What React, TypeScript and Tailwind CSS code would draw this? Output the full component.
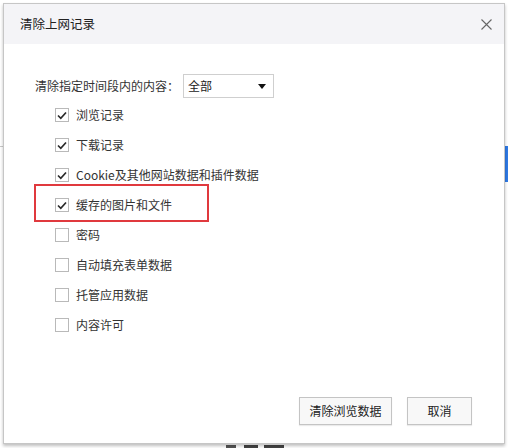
import React from "react";

const items = [
  { label: "浏览记录", checked: true },
  { label: "下载记录", checked: true },
  { label: "Cookie及其他网站数据和插件数据", checked: true },
  { label: "缓存的图片和文件", checked: true, highlight: true },
  { label: "密码", checked: false },
  { label: "自动填充表单数据", checked: false },
  { label: "托管应用数据", checked: false },
  { label: "内容许可", checked: false },
];

function Checkbox({ checked }: { checked: boolean }) {
  return (
    <span className="w-[14px] h-[14px] border border-[#b9b9b9] bg-white flex items-center justify-center shrink-0">
      {checked && (
        <svg width="10" height="9" viewBox="0 0 10 9">
          <polyline points="1,4.5 3.8,7.3 9,1.5" fill="none" stroke="#2a2a2a" strokeWidth="1.7" />
        </svg>
      )}
    </span>
  );
}

export default function App() {
  return (
    <div
      className="relative w-[508px] h-[448px] bg-white overflow-hidden text-[12px] text-[#333]"
      style={{ fontFamily: '"Microsoft YaHei", "Noto Sans CJK SC", "Noto Sans", sans-serif' }}
    >
      {/* background bits peeking around dialog */}
      <div className="absolute left-0 top-[146px] w-[3px] h-px bg-[#c8c8c8]" />
      <div className="absolute left-[504px] top-[146px] w-[4px] h-[36px] bg-[#2f7ae5]" />
      <div className="absolute left-[226px] top-[445px] w-[10px] h-[3px] bg-[#555]" />
      <div className="absolute left-[244px] top-[445px] w-[14px] h-[3px] bg-[#444]" />
      <div className="absolute left-[264px] top-[445px] w-[20px] h-[3px] bg-[#444]" />

      <div className="absolute left-[3px] top-[3px] w-[502px] h-[441px] border border-[#c6c6c6] bg-white flex flex-col shadow-[0_2px_3px_rgba(0,0,0,0.25)]">
        {/* header */}
        <div className="h-[40px] bg-[#f4f4f7] flex items-center justify-between pl-[16px] pr-[12px] shrink-0">
          <span className="text-[12.5px] text-[#222]">清除上网记录</span>
          <svg width="11" height="11" viewBox="0 0 11 11">
            <path d="M0.5 0.5 L10.5 10.5 M10.5 0.5 L0.5 10.5" stroke="#666" strokeWidth="1.1" />
          </svg>
        </div>

        {/* body */}
        <div className="flex-1 flex flex-col pt-[30px]">
          <div className="flex items-center pl-[31px] h-[24px]">
            <span className="w-[148px]">清除指定时间段内的内容：</span>
            <div className="w-[91px] h-[24px] border border-[#cfcfcf] flex items-center justify-between pl-[4px] pr-[7px]">
              <span className="text-[#222]">全部</span>
              <svg width="8" height="5" viewBox="0 0 8 5">
                <polygon points="0,0 8,0 4,5" fill="#111" />
              </svg>
            </div>
          </div>

          <div className="flex flex-col pl-[51px] pt-[2px]">
            {items.map((it) => (
              <div key={it.label} className="relative h-[30px] flex items-center gap-[7px]">
                <Checkbox checked={it.checked} />
                <span className="text-[#333]">{it.label}</span>
                {it.highlight && (
                  <div className="absolute left-[-21px] top-[-6px] w-[175px] h-[38px] border-2 border-[#e0393e]" />
                )}
              </div>
            ))}
          </div>

          <div className="mt-auto flex justify-end gap-[15px] pr-[32px] pb-[18px]">
            <button className="w-[93px] h-[28px] border border-[#c4c4c4] bg-[#f8f8f8] text-[#222] text-[12px] shadow-[0_1px_1px_rgba(0,0,0,0.08)]">
              清除浏览数据
            </button>
            <button className="w-[65px] h-[28px] border border-[#c4c4c4] bg-[#f8f8f8] text-[#222] text-[12px] shadow-[0_1px_1px_rgba(0,0,0,0.08)]">
              取消
            </button>
          </div>
        </div>
      </div>
    </div>
  );
}
